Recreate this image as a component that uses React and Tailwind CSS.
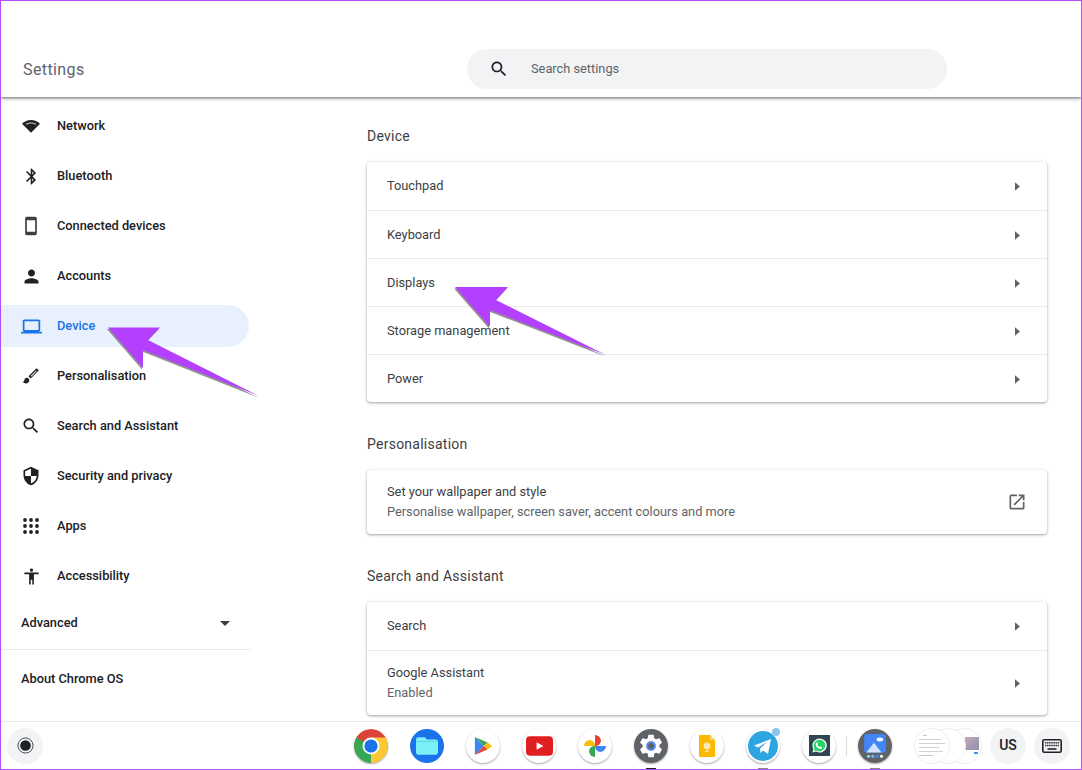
import React from "react";

const P = ({ d, className = "w-6 h-6", fill = "currentColor" }) => (
  <svg viewBox="0 0 24 24" className={className} fill={fill}><path d={d} /></svg>
);

const icons = {
  wifi: (
    <svg viewBox="0 0 24 24" className="w-[18px] h-[18px]" fill="#202124">
      <path d="M12 4C7.3 4 3.1 5.900 0 9l12 12L24 9c-3.100-3.100-7.300-5-12-5z" />
      <path d="M5 9.200C7 7.900 9.400 7.200 12 7.200s5 .7 7 2L18 10.200c-1.700-1-3.800-1.600-6-1.600s-4.300.6-6 1.600z" fill="#fff" opacity="0.75" />
    </svg>
  ),
  bluetooth: <P className="w-[19px] h-[19px]" d="M17.710 7.710L12 2h-1v7.590L6.410 5 5 6.410 10.590 12 5 17.590 6.410 19 11 14.410V22h1l5.710-5.710-4.300-4.290 4.300-4.290zM13 5.830l1.880 1.880L13 9.590V5.830zm1.880 10.460L13 18.170v-3.760l1.880 1.880z" />,
  phone: <P className="w-5 h-5" fill="#3c4043" d="M17 1.010L7 1c-1.100 0-2 .9-2 2v18c0 1.100.9 2 2 2h10c1.100 0 2-.9 2-2V3c0-1.100-.9-1.990-2-1.990zM17 19H7V5h10v14z" />,
  person: <P className="w-[21px] h-[21px]" d="M12 12c2.210 0 4-1.790 4-4s-1.790-4-4-4-4 1.790-4 4 1.790 4 4 4zm0 2c-2.670 0-8 1.340-8 4v2h16v-2c0-2.660-5.330-4-8-4z" />,
  laptop: <P className="w-[21px] h-[21px]" d="M20 18c1.100 0 1.990-.9 1.990-2L22 6c0-1.100-.9-2-2-2H4c-1.100 0-2 .9-2 2v10c0 1.100.9 2 2 2H0v2h24v-2h-4zM4 6h16v10H4V6z" />,
  brush: (
    <svg viewBox="0 0 24 24" className="w-5 h-5" fill="#202124">
      <path d="M7 14c-1.660 0-3 1.340-3 3 0 1.310-1.160 2-2 2 .92 1.220 2.490 2 4 2 2.210 0 4-1.790 4-4 0-1.660-1.340-3-3-3zm13.710-9.370l-1.340-1.340c-.39-.39-1.020-.39-1.410 0L9 12.250 11.750 15l8.960-8.960c.39-.39.39-1.020 0-1.410z" />
      <path d="M12 12.300l6.500-6.500" stroke="#fff" strokeWidth="1.300" fill="none" opacity="0.8" />
    </svg>
  ),
  search: <P className="w-5 h-5" fill="#202124" d="M15.500 14h-.79l-.28-.27C15.410 12.590 16 11.110 16 9.500 16 5.910 13.090 3 9.500 3S3 5.910 3 9.500 5.910 16 9.500 16c1.610 0 3.090-.59 4.230-1.570l.27.28v.79l5 4.990L20.490 19l-4.990-5zm-6 0C7.010 14 5 11.990 5 9.500S7.010 5 9.500 5 14 7.010 14 9.500 11.990 14 9.500 14z" />,
  shield: <P className="w-5 h-5" d="M12 1L3 5v6c0 5.550 3.840 10.740 9 12 5.160-1.260 9-6.450 9-12V5l-9-4zm0 10.990h7c-.53 4.120-3.280 7.790-7 8.940V12H5V6.300l7-3.110v8.800z" />,
  apps: (
    <svg viewBox="0 0 16 16" className="w-4 h-4" fill="#202124">
      {[2, 8, 14].flatMap((y) => [2, 8, 14].map((x) => <circle key={`${x}-${y}`} cx={x} cy={y} r="1.900" />))}
    </svg>
  ),
  access: <P className="w-[19px] h-[19px]" d="M12 2c1.100 0 2 .9 2 2s-.9 2-2 2-2-.9-2-2 .9-2 2-2zm9 7h-6v13h-2v-6h-2v6H9V9H3V7h18v2z" />,
};

const nav = [
  ["Network", "wifi"],
  ["Bluetooth", "bluetooth"],
  ["Connected devices", "phone"],
  ["Accounts", "person"],
  ["Device", "laptop", true],
  ["Personalisation", "brush"],
  ["Search and Assistant", "search"],
  ["Security and privacy", "shield"],
  ["Apps", "apps"],
  ["Accessibility", "access"],
];

const Chevron = ({ down }) => (
  <svg viewBox="0 0 6 10" className={`w-[5px] h-[9px] ${down ? "mt-[1px]" : ""}`} fill="#5f6368"><path d="M0 0l6 5-6 5z" /></svg>
);

const Row = ({ title, sub, border, h = "h-[48px]", icon, up, down }) => (
  <div className={`flex items-center justify-between pl-5 pr-[27px] ${h} ${border ? "border-t border-[#e8eaed]" : ""}`}>
    <div className={`flex flex-col gap-[3px] ${up ? "-mt-[2px]" : ""}`}>
      <div className="text-[12.8px] leading-[17px] text-[#3c4043]">{title}</div>
      {sub && <div className="text-[12.8px] leading-[17px] text-[#5f6368]">{sub}</div>}
    </div>
    {icon || <Chevron down={down} />}
  </div>
);

const Card = ({ children, className = "" }) => (
  <div className={`rounded-[4px] bg-white shadow-[0_1px_2px_rgba(60,64,67,0.3),0_1px_3px_1px_rgba(60,64,67,0.15)] ${className}`}>{children}</div>
);

const Heading = ({ children, className = "" }) => (
  <div className={`text-[14px] leading-[18px] text-[#3c4043] tracking-[0.25px] ${className}`}>{children}</div>
);

const Round = ({ children, dot, mark }) => (
  <div className="relative w-[34px] h-[34px] shrink-0">
    <div className="w-[34px] h-[34px] rounded-full bg-white shadow-[0_1px_2px_rgba(0,0,0,0.35)] flex items-center justify-center overflow-hidden">{children}</div>
    {dot && <div className="absolute -top-[1px] right-0 w-2 h-2 rounded-full bg-[#8ac6ee]" />}
    {mark && <div className={`absolute -bottom-[7px] left-[12px] w-[10px] h-[2px] ${mark}`} />}
  </div>
);

const Arrow = ({ points, className }) => {
  const shadow = points.map(([x, y]) => `${x - 1},${y + 1.500}`).join(" ");
  return (
    <svg viewBox="0 0 1082 770" className={className}>
      <polygon points={shadow} fill="#6f6f6f" opacity="0.75" />
      <polygon points={points.map((p) => p.join(",")).join(" ")} fill="#b340ff" />
    </svg>
  );
};

export default function App() {
  return (
    <div className="relative h-[770px] w-[1082px] overflow-hidden border border-[#b14eff] bg-white flex flex-col" style={{ fontFamily: "Roboto, 'Noto Sans', sans-serif" }}>
      <header className="relative z-10 h-[96px] shrink-0 bg-white shadow-[0_1px_2px_rgba(60,64,67,0.55),0_2px_4px_rgba(60,64,67,0.3)] flex items-end pb-[8px]">
        <div className="w-[466px] pl-[22px] pb-[9px] text-[16px] leading-5 text-[#5f6368] tracking-[0.4px]">Settings</div>
        <div className="w-[480px] h-[40px] rounded-full bg-[#f1f3f4] flex items-center pl-[22px]">
          {icons.search}
          <span className="ml-[22px] text-[12.8px] text-[#5f6368]">Search settings</span>
        </div>
      </header>

      <div className="flex flex-1 min-h-0">
        <aside className="w-[250px] shrink-0 flex flex-col pt-[4px]">
          {nav.map(([label, icon, active]) => (
            <div key={label} className="h-[50px] flex items-center">
              <div className={`w-[248px] h-[42px] rounded-r-full flex items-center ${active ? "bg-[#e8f0fe] text-[#1a73e8]" : "text-[#202124]"}`}>
                <div className="w-[56px] pl-[4px] flex justify-center shrink-0">{icons[icon]}</div>
                <span className="text-[12.8px] font-medium">{label}</span>
              </div>
            </div>
          ))}
          <div className="h-[22px] mt-[11px] pl-5 pr-[21px] flex items-center justify-between">
            <span className="text-[12.8px] font-medium text-[#202124]">Advanced</span>
            <svg viewBox="0 0 10 5" className="w-[10px] h-[5px]" fill="#3c4043"><path d="M0 0h10L5 5z" /></svg>
          </div>
          <div className="mt-[15px] border-t border-[#e8eaed] pt-[19px] pl-5 text-[12.8px] leading-[20px] font-medium text-[#202124]">About Chrome OS</div>
        </aside>

        <main className="flex-1 min-w-0 overflow-hidden pl-[116px] pr-[34px] pt-[30px]">
          <Heading>Device</Heading>
          <Card className="mt-[17px]">
            <Row title="Touchpad" up />
            <Row title="Keyboard" border down />
            <Row title="Displays" border down />
            <Row title="Storage management" border down />
            <Row title="Power" border down />
          </Card>
          <Heading className="mt-[33px]">Personalisation</Heading>
          <Card className="mt-[17px]">
            <Row
              up
              h="h-[64px]"
              title="Set your wallpaper and style"
              sub="Personalise wallpaper, screen saver, accent colours and more"
              icon={<div className="-mr-[7px]"><P className="w-[20px] h-[20px]" fill="#5f6368" d="M19 19H5V5h7V3H5c-1.110 0-2 .9-2 2v14c0 1.100.89 2 2 2h14c1.100 0 2-.9 2-2v-7h-2v7zM14 3v2h3.590l-9.830 9.830 1.410 1.410L19 6.410V10h2V3h-7z" /></div>}
            />
          </Card>
          <Heading className="mt-[33px]">Search and Assistant</Heading>
          <Card className="mt-[17px]">
            <Row title="Search" up />
            <Row h="h-[65px]" title="Google Assistant" sub="Enabled" border up />
          </Card>
        </main>
      </div>

      <footer className="relative z-10 h-[48px] shrink-0 bg-white border-t border-[#e8eaed] flex items-center">
        <div className="ml-[6px] w-[36px] h-[36px] rounded-full bg-[#f1f3f4] flex items-center justify-center">
          <svg viewBox="0 0 18 18" className="w-[17px] h-[17px]">
            <circle cx="9" cy="9" r="8" fill="none" stroke="#3c4043" strokeWidth="1" />
            <circle cx="9" cy="9" r="5.600" fill="#202124" />
          </svg>
        </div>
        <div className="ml-[311px] flex items-center gap-[22px]">
          <Round>
            <svg viewBox="0 0 34 34" className="w-[34px] h-[34px]">
              <circle cx="17" cy="17" r="17" fill="#db4437" />
              <path d="M17 17L2.300 8.500A17 17 0 0 0 17 34z" fill="#34a853" />
              <path d="M17 17V34A17 17 0 0 0 31.700 8.500H17z" fill="#fcc934" />
              <circle cx="17" cy="17" r="8.500" fill="#fff" />
              <circle cx="17" cy="17" r="6.600" fill="#1a73e8" />
            </svg>
          </Round>
          <div className="w-[34px] h-[34px] rounded-full bg-[#1a73e8] flex items-center justify-center">
            <svg viewBox="0 0 20 16" className="w-[22px] h-[18px]">
              <path d="M2 0h6l2 2h8a2 2 0 0 1 2 2v10a2 2 0 0 1-2 2H2a2 2 0 0 1-2-2V2a2 2 0 0 1 2-2z" fill="#7cf0f7" />
              <path d="M0 4h20v-.5H0z" fill="#4fc3d8" />
            </svg>
          </div>
          <Round>
            <svg viewBox="0 0 20 22" className="w-[18px] h-[20px]">
              <path d="M1 1v20l10-10z" fill="#4285f4" />
              <path d="M1 1l10 10 4-4z" fill="#34a853" />
              <path d="M1 21l10-10 4 4z" fill="#ea4335" />
              <path d="M15 7l-4 4 4 4 5-4z" fill="#fbbc04" />
            </svg>
          </Round>
          <Round>
            <svg viewBox="0 0 28 20" className="w-[27px] h-[20px]">
              <rect width="28" height="20" rx="4" fill="#e02020" />
              <path d="M11 6l7 4-7 4z" fill="#fff" />
            </svg>
          </Round>
          <Round>
            <svg viewBox="0 0 24 24" className="w-[24px] h-[24px]">
              <path d="M12 12V1a6 6 0 0 1 6 6 6 6 0 0 1-6 5z" fill="#ea4335" />
              <path d="M12 12h11a6 6 0 0 1-6 6 6 6 0 0 1-5-6z" fill="#4285f4" />
              <path d="M12 12v11a6 6 0 0 1-6-6 6 6 0 0 1 6-5z" fill="#34a853" />
              <path d="M12 12H1a6 6 0 0 1 6-6 6 6 0 0 1 5 6z" fill="#fbbc04" />
            </svg>
          </Round>
          <Round mark="bg-[#202124]">
            <div className="w-[34px] h-[34px] bg-[#5f6368] flex items-center justify-center">
              <svg viewBox="0 0 24 24" className="w-[28px] h-[28px]">
                <path fill="#fff" d="M19.140 12.940c.04-.3.060-.61.060-.94 0-.32-.02-.64-.07-.94l2.030-1.580a.49.49 0 0 0 .12-.61l-1.920-3.320a.49.49 0 0 0-.59-.22l-2.390.96a7 7 0 0 0-1.620-.94l-.36-2.540a.48.48 0 0 0-.48-.41h-3.840a.48.48 0 0 0-.47.41l-.36 2.540c-.59.24-1.130.57-1.620.94l-2.390-.96a.49.49 0 0 0-.59.22L2.740 8.870a.48.48 0 0 0 .12.61l2.030 1.580c-.05.3-.09.63-.09.94s.02.64.07.94l-2.030 1.580a.49.49 0 0 0-.12.61l1.920 3.320c.12.22.37.29.59.22l2.390-.96c.5.38 1.030.7 1.620.94l.36 2.540c.05.24.24.41.48.41h3.840c.24 0 .44-.17.47-.41l.36-2.540c.59-.24 1.130-.56 1.620-.94l2.390.96c.22.08.47 0 .59-.22l1.920-3.320a.48.48 0 0 0-.12-.61l-2.010-1.580z" />
                <circle cx="12" cy="12" r="4.200" fill="#5b8def" />
                <circle cx="12" cy="12" r="2.500" fill="#5f6368" />
              </svg>
            </div>
          </Round>
          <Round>
            <svg viewBox="0 0 16 22" className="w-[16px] h-[22px]">
              <path d="M1 0h10l5 5v16a1 1 0 0 1-1 1H1a1 1 0 0 1-1-1V1a1 1 0 0 1 1-1z" fill="#fbb900" />
              <path d="M11 0l5 5h-5z" fill="#f6d27a" />
              <circle cx="8" cy="11" r="3.400" fill="#fde9b8" />
              <rect x="6.300" y="15.500" width="3.400" height="1.500" fill="#fde9b8" />
            </svg>
          </Round>
          <Round dot mark="bg-[#8a8a8a]">
            <svg viewBox="0 0 30 30" className="w-[30px] h-[30px]">
              <circle cx="15" cy="15" r="15" fill="#2ca5e0" />
              <path d="M6 14.500L23 8l-3 15-5-3.500-2.500 2.500-.5-4.500 7-6.500-9 5.500z" fill="#fff" />
            </svg>
          </Round>
          <Round>
            <div className="w-[21px] h-[21px] bg-[#2f4550] flex items-center justify-center">
              <svg viewBox="0 0 24 24" className="w-[17px] h-[17px]">
                <path d="M12 2a10 10 0 0 0-8.600 15L2 22l5.200-1.400A10 10 0 1 0 12 2z" fill="#fff" />
                <path d="M12 3.800a8.200 8.200 0 0 0-7 12.500l-.9 3.500 3.600-.9A8.200 8.200 0 1 0 12 3.800z" fill="#25d366" />
                <path d="M8.500 7.500c1 0 1.500 2.500 1 3l-.5.700c.8 1.400 1.800 2.300 3 3l.8-.7c.5-.4 3 .7 3 1.300 0 1.200-1.200 2-2.300 2-3.500 0-6.800-3.500-6.800-6.600 0-1.200.8-2.700 1.800-2.700z" fill="#fff" />
              </svg>
            </div>
          </Round>
        </div>
        <div className="ml-[10px] w-[1px] h-[20px] bg-[#dadce0]" />
        <div className="ml-[11px]">
          <Round mark="bg-[#8a8a8a]">
            <div className="w-[34px] h-[34px] bg-[#5f6368] flex items-center justify-center">
              <svg viewBox="0 0 24 24" className="w-[26px] h-[26px]">
                <rect x="2" y="1" width="20" height="17" rx="2" fill="#4285f4" />
                <path d="M4 18l7-9 7 9z" fill="#cfe3fb" />
                <ellipse cx="16.500" cy="6" rx="3" ry="1.800" fill="#fff" />
                <circle cx="6" cy="21.500" r="1.400" fill="#7fe3e8" />
                <circle cx="10" cy="21.500" r="1.400" fill="#8ab4f8" />
                <circle cx="14" cy="21.500" r="1.400" fill="#4285f4" />
                <circle cx="18" cy="21.500" r="1.400" fill="#fff" />
              </svg>
            </div>
          </Round>
        </div>
        <div className="ml-[22px] relative w-[68px] h-[36px] flex shrink-0">
          <div className="absolute left-[32px] top-0 w-[36px] h-[36px] rounded-full bg-white border border-[#eeeeee] flex flex-col items-end pr-[2px] pt-[8px] gap-[2px]">
            <div className="w-[14px] h-[13px] bg-gradient-to-br from-[#c7a9b5] to-[#8d8fb0]" />
            <div className="w-[4px] h-[2px] mr-[1px] bg-[#4a86e8]" />
          </div>
          <div className="absolute left-[16px] top-0 w-[36px] h-[36px] rounded-full bg-white border border-[#eeeeee]" />
          <div className="absolute left-0 top-0 w-[36px] h-[36px] rounded-full bg-white border border-[#eeeeee] overflow-hidden flex flex-col gap-[3px] pl-[4px] pt-[6px]">
            <div className="h-[1px] w-[4px] ml-[4px] bg-[#c4c4c4]" />
            <div className="h-[1px] w-[22px] bg-[#d0d0d0]" />
            <div className="h-[1px] w-[26px] bg-[#d0d0d0]" />
            <div className="h-[1px] w-[20px] bg-[#d0d0d0]" />
            <div className="h-[1px] w-[24px] bg-[#d0d0d0]" />
            <div className="h-[1px] w-[14px] bg-[#c4c4c4]" />
          </div>
        </div>
        <div className="ml-[8px] w-[36px] h-[36px] rounded-full bg-[#f1f3f4] flex items-center justify-center text-[14px] font-medium text-[#202124]">US</div>
        <div className="ml-[8px] w-[36px] h-[36px] rounded-full bg-[#f1f3f4] flex items-center justify-center">
          <svg viewBox="0 0 20 14" className="w-[20px] h-[14px]">
            <rect x="0.800" y="0.800" width="18.400" height="12.400" rx="1.500" fill="none" stroke="#202124" strokeWidth="1.600" />
            <path d="M3 3.800h14M3 6.600h14" stroke="#202124" strokeWidth="1.500" strokeDasharray="1.400 0.700" />
            <path d="M5.500 10h9" stroke="#202124" strokeWidth="1.600" />
          </svg>
        </div>
      </footer>

      <Arrow className="absolute -left-[1px] -top-[1px] z-20 w-[1082px] h-[770px] pointer-events-none" points={[[108, 327.5], [160, 327.5], [148, 340], [259, 396], [143, 350], [143, 368]]} />
      <Arrow className="absolute -left-[1px] -top-[1px] z-20 w-[1082px] h-[770px] pointer-events-none" points={[[455, 287], [508, 287], [496, 300], [606, 355], [490, 310], [490, 327]]} />
    </div>
  );
}
